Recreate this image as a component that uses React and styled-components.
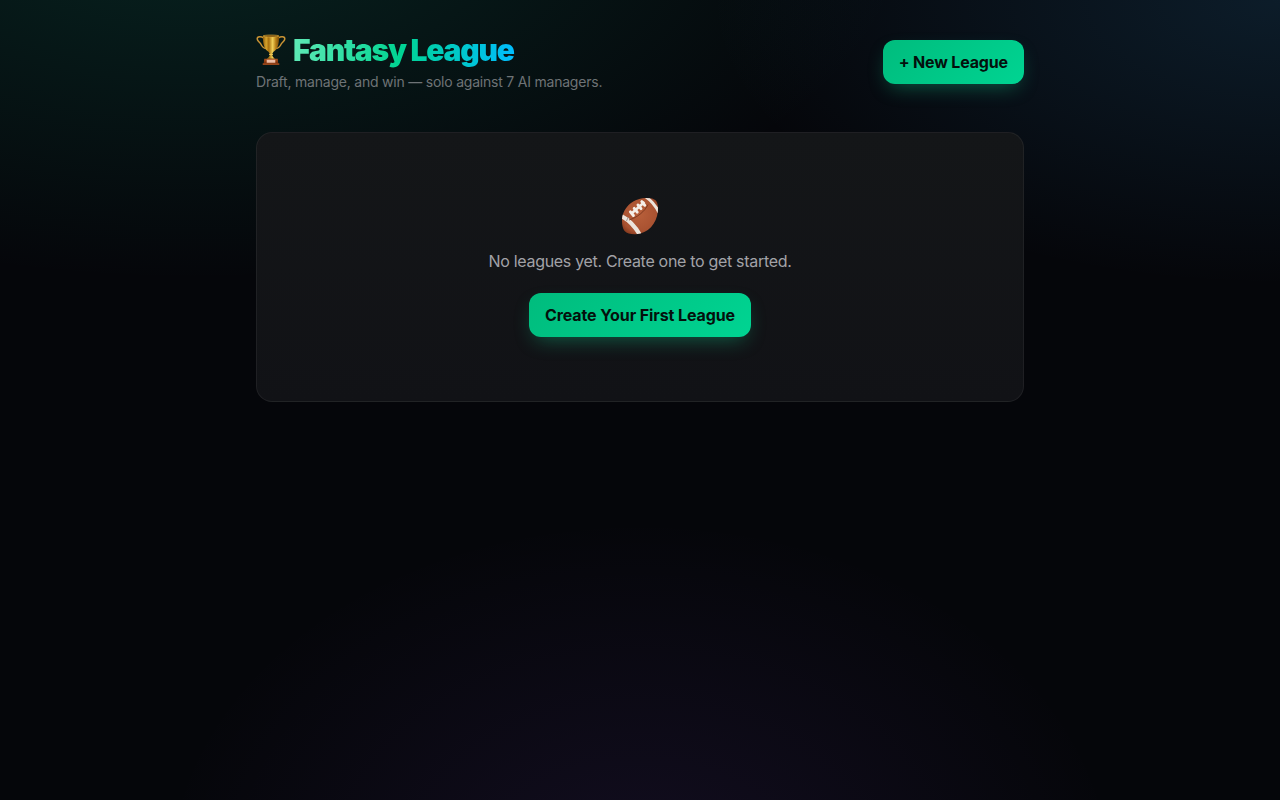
import React from 'react';
import styled, { createGlobalStyle } from 'styled-components';

const GlobalStyle = createGlobalStyle`
  *, *::before, *::after { box-sizing: border-box; }
  body {
    margin: 0;
    min-height: 100vh;
    color: #f4f4f5;
    font-family: Inter, "Liberation Sans", sans-serif;
    -webkit-font-smoothing: antialiased;
    background:
      radial-gradient(1200px 600px at 15% -10%, rgba(16, 185, 145, 0.16), transparent 60%),
      radial-gradient(1000px 500px at 100% 0%, rgba(56, 165, 233, 0.14), transparent 57%),
      radial-gradient(800px 600px at 50% 110%, rgba(150, 85, 247, 0.095), transparent 60%),
      #05060a;
    background-attachment: fixed;
  }
  h1, p { margin: 0; }
`;

const Page = styled.main`
  width: 768px;
  margin: 0 auto;
  padding: 32px 0;
`;

const Header = styled.header`
  display: flex;
  align-items: center;
  justify-content: space-between;
  margin-bottom: 40px;
`;

const TitleRow = styled.div`
  display: flex;
  align-items: center;
  gap: 7px;
  height: 36px;
`;

const Title = styled.h1`
  font-size: 30px;
  line-height: 36px;
  font-weight: 900;
  letter-spacing: -1.22px;
  white-space: nowrap;
  padding-right: 2px;
  color: transparent;
  background: linear-gradient(to right, #5ee9b5, #00d492 48%, #00bcff);
  background-clip: text;
  -webkit-background-clip: text;
`;

const Subtitle = styled.p`
  margin-top: 4px;
  font-size: 14px;
  line-height: 20px;
  letter-spacing: -0.215px;
  color: #6e7376;
  white-space: nowrap;
`;

const Button = styled.button`
  height: 44px;
  padding: 0 16px;
  border: 0;
  border-radius: 12px;
  font: 700 16px/24px Inter, "Liberation Sans", sans-serif;
  color: #04100c;
  white-space: nowrap;
  letter-spacing: ${({ $tracking }) => $tracking};
  background: linear-gradient(135deg, #00bc7d, #00d492);
  box-shadow: 0 8px 20px -6px rgba(16, 185, 129, 0.45);
`;

const EmptyCard = styled.section`
  display: flex;
  flex-direction: column;
  align-items: center;
  padding: 64px;
  border: 1px solid rgba(255, 255, 255, 0.06);
  border-radius: 16px;
  background: linear-gradient(to bottom, #141618, #111216);
`;

const IconBox = styled.div`
  display: flex;
  align-items: center;
  height: 40px;
  margin-bottom: 12px;
`;

const Message = styled.p`
  margin-bottom: 20px;
  font-size: 16px;
  line-height: 24px;
  letter-spacing: -0.31px;
  color: #a2a2a7;
  white-space: nowrap;
`;

function Trophy() {
  return (
    <svg width="30" height="32" viewBox="0 0 30 32" aria-hidden="true">
      <defs>
        <linearGradient id="gold" x1="0" x2="1">
          <stop offset="0" stopColor="#8d5a0c" />
          <stop offset="0.2" stopColor="#d6a42c" />
          <stop offset="0.36" stopColor="#a76f0e" />
          <stop offset="0.6" stopColor="#f0cf58" />
          <stop offset="0.8" stopColor="#b67d15" />
          <stop offset="1" stopColor="#7c4d08" />
        </linearGradient>
        <linearGradient id="plinth" x1="0" x2="0" y1="0" y2="1">
          <stop offset="0" stopColor="#b4551d" />
          <stop offset="1" stopColor="#6e2708" />
        </linearGradient>
      </defs>
      <g fill="none" stroke="#c99334" strokeWidth="1.5" strokeLinecap="round">
        <path d="M7.500 4C5.500 2.200 1.100 2.200 1.200 4.900c.1 2.300 2.600 3.100 3.600 5.100.9 2 2 4.300 5.200 4.400" />
        <path d="M22.500 4c2-1.800 6.400-1.800 6.300.9-.1 2.300-2.600 3.100-3.600 5.100-.9 2-2 4.300-5.200 4.400" />
      </g>
      <path d="M7 2h16c.2 7.600-1 12.300-4.500 15-1.500 1.200-2.200 2.200-2.300 3.600 0 1.600 1.100 2.800 2.800 4.100h-8c1.700-1.300 2.800-2.500 2.800-4.100-.1-1.400-.8-2.400-2.300-3.600C8 14.300 6.800 9.600 7 2z" fill="url(#gold)" />
      <ellipse cx="15" cy="2" rx="8" ry="1" fill="#6f450b" stroke="#dfb13e" strokeWidth=".6" />
      <path d="M13 20.400h4" stroke="#f0cb58" strokeWidth="1" />
      <path d="M8.300 24.800h13.400l.6 5H7.700z" fill="url(#plinth)" />
      <path d="M10.700 25.800h8.600v2.900h-8.600z" fill="#edbda5" />
      <path d="M6.700 29.300h16.600v1.600H6.700z" fill="#a64b1b" />
    </svg>
  );
}

function Football() {
  return (
    <svg width="40" height="40" viewBox="0 0 40 40" aria-hidden="true">
      <defs>
        <radialGradient id="leather" cx=".48" cy=".42" r=".62">
          <stop offset="0" stopColor="#b85f3a" />
          <stop offset=".7" stopColor="#a95231" />
          <stop offset="1" stopColor="#783117" />
        </radialGradient>
        <clipPath id="ball">
          <path d="M2 24C2 12 11.500 1.800 25 1c5-.2 9 .6 10.800 2.500C37.600 5.500 38.300 9 37.900 14 36.700 27 28 36.500 16 37.200c-4.800.3-9.200-.9-11.400-3.300C2.700 31.600 2 28 2 24z" />
        </clipPath>
      </defs>
      <g clipPath="url(#ball)">
        <path d="M0 0h40v40H0z" fill="url(#leather)" />
        <path d="M26 0C32 4 35.500 8.500 39 15.500" fill="none" stroke="#ece4dc" strokeWidth="3" />
        <path d="M0 18.300c7.500 3.500 14.500 10 20 19.700" fill="none" stroke="#ece4dc" strokeWidth="4.200" />
        <path d="M8.300 20l-1.800 4" stroke="#8e8583" strokeWidth=".8" />
        <path d="M9 23C17 20.500 25 14.500 28 7.500" fill="none" stroke="#74321b" strokeWidth=".8" />
        <path d="M11.500 16.500 24.500 5" stroke="#f5eee8" strokeWidth="2.500" />
        <path d="m10.400 14.800 3 3.700M14.200 11.400l3 3.700M18 8l3 3.700M21.800 4.600l3 3.700" stroke="#f5eee8" strokeWidth="2.900" strokeLinecap="round" />
      </g>
    </svg>
  );
}

export default function App() {
  return (
    <>
      <GlobalStyle />
      <Page>
        <Header>
          <div>
            <TitleRow>
              <Trophy />
              <Title>Fantasy League</Title>
            </TitleRow>
            <Subtitle>Draft, manage, and win — solo against 7 AI managers.</Subtitle>
          </div>
          <Button $tracking="-0.15px">+ New League</Button>
        </Header>
        <EmptyCard>
          <IconBox><Football /></IconBox>
          <Message>No leagues yet. Create one to get started.</Message>
          <Button $tracking="-0.1px">Create Your First League</Button>
        </EmptyCard>
      </Page>
    </>
  );
}
